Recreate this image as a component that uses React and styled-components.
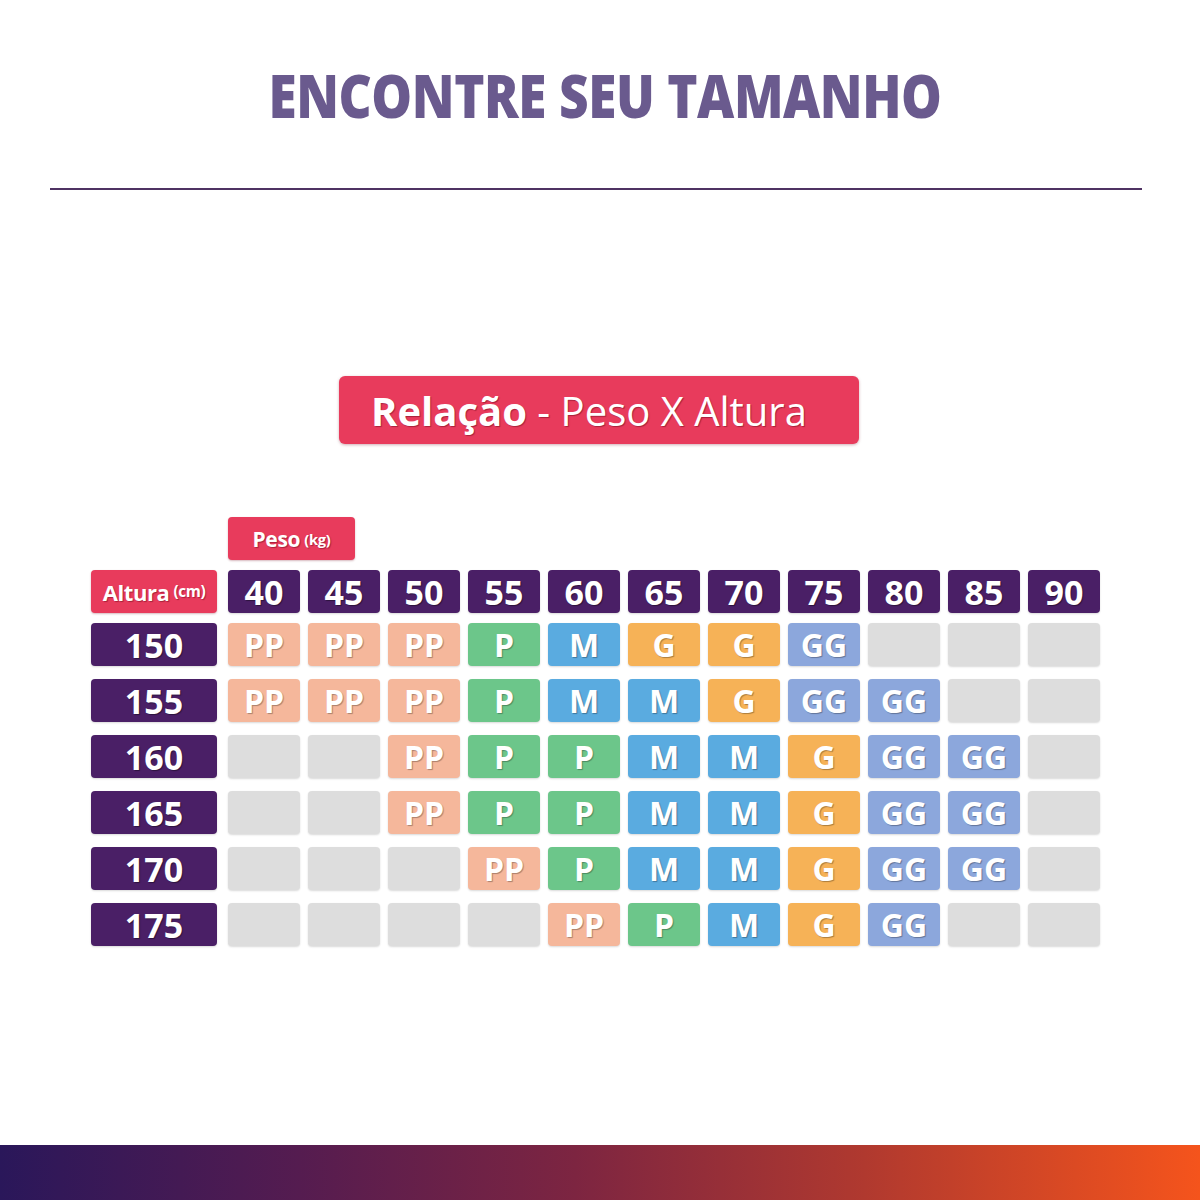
import React from "react";
import styled, { createGlobalStyle } from "styled-components";

const GlobalStyle = createGlobalStyle`
  body {
    margin: 0;
    background: #ffffff;
    font-family: "Open Sans", "Noto Sans", sans-serif;
  }
`;

const weights = ["40", "45", "50", "55", "60", "65", "70", "75", "80", "85", "90"];

const rows = [
  { height: "150", sizes: ["PP", "PP", "PP", "P", "M", "G", "G", "GG", "", "", ""] },
  { height: "155", sizes: ["PP", "PP", "PP", "P", "M", "M", "G", "GG", "GG", "", ""] },
  { height: "160", sizes: ["", "", "PP", "P", "P", "M", "M", "G", "GG", "GG", ""] },
  { height: "165", sizes: ["", "", "PP", "P", "P", "M", "M", "G", "GG", "GG", ""] },
  { height: "170", sizes: ["", "", "", "PP", "P", "M", "M", "G", "GG", "GG", ""] },
  { height: "175", sizes: ["", "", "", "", "PP", "P", "M", "G", "GG", "", ""] },
];

const sizeColors = {
  PP: "#f5b79b",
  P: "#6cc68a",
  M: "#5aabe0",
  G: "#f6b257",
  GG: "#8ca7dc",
  "": "#dddddd",
};

function App() {
  return (
    <Page>
      <GlobalStyle />
      <Title>ENCONTRE SEU TAMANHO</Title>
      <Divider />
      <Banner>
        <strong>Relação</strong>&nbsp;- Peso X Altura
      </Banner>
      <Chart>
        <PesoTag>
          Peso <small>(kg)</small>
        </PesoTag>
        <Row $header>
          <LabelTag>
            Altura <small>(cm)</small>
          </LabelTag>
          {weights.map((w) => (
            <HeadCell key={w}>{w}</HeadCell>
          ))}
        </Row>
        {rows.map((r) => (
          <Row key={r.height}>
            <HeightCell>{r.height}</HeightCell>
            {r.sizes.map((s, i) => (
              <SizeCell key={i} $color={sizeColors[s]}>
                {s}
              </SizeCell>
            ))}
          </Row>
        ))}
      </Chart>
      <BottomBar />
    </Page>
  );
}

export default App;

const Page = styled.div`
  width: 1200px;
  height: 1200px;
  display: flex;
  flex-direction: column;
  overflow: hidden;
`;

const Title = styled.h1`
  margin: 65px 0 0;
  font-size: 60px;
  line-height: 60px;
  font-weight: 800;
  color: #6a5a8e;
  text-align: center;
  letter-spacing: -0.5px;
  transform: translateX(5px) scaleX(0.855);
`;

const Divider = styled.div`
  margin: 63px 0 0 50px;
  width: 1092px;
  height: 2px;
  background: #4f3263;
`;

const Banner = styled.div`
  align-self: flex-start;
  margin: 186px 0 0 339px;
  width: 520px;
  height: 68px;
  display: flex;
  align-items: center;
  justify-content: center;
  padding-right: 20px;
  box-sizing: border-box;
  background: #e83b5c;
  border-radius: 6px;
  box-shadow: 0 1px 3px rgba(120, 20, 40, 0.35);
  color: #ffffff;
  font-size: 40px;
  font-weight: 400;
  text-shadow: 1px 1px 1px rgba(90, 0, 20, 0.45);

  strong {
    font-weight: 700;
  }
`;

const Chart = styled.div`
  margin: 73px 0 0 91px;
  display: flex;
  flex-direction: column;
  gap: 13px;
`;

const Tag = styled.div`
  display: flex;
  align-items: center;
  justify-content: center;
  background: #e83b5c;
  border-radius: 4px;
  color: #ffffff;
  font-weight: 700;
  box-shadow: 0 1px 2px rgba(120, 20, 40, 0.3);
  text-shadow: 1px 1px 1px rgba(90, 0, 20, 0.45);

  small {
    font-size: 0.7em;
    margin-left: 4px;
  }
`;

const PesoTag = styled(Tag)`
  margin: 0 0 -3px 137px;
  width: 127px;
  height: 43px;
  font-size: 21px;
  letter-spacing: -0.3px;
`;

const LabelTag = styled(Tag)`
  width: 126px;
  height: 43px;
  margin-right: 3px;
  font-size: 22px;
  letter-spacing: -0.4px;
`;

const Row = styled.div`
  display: flex;
  gap: 8px;
  margin-bottom: ${(p) => (p.$header ? "-3px" : "0")};
`;

const Cell = styled.div`
  width: 72px;
  height: 43px;
  display: flex;
  align-items: center;
  justify-content: center;
  border-radius: 4px;
  color: #ffffff;
  font-weight: 700;
  box-shadow: 0 1px 2px rgba(0, 0, 0, 0.15);
`;

const HeadCell = styled(Cell)`
  background: #4a1f66;
  font-size: 34px;
  text-shadow: 1px 1px 1px rgba(0, 0, 0, 0.4);
`;

const HeightCell = styled(Cell)`
  width: 126px;
  margin-right: 3px;
  background: #4a1f66;
  font-size: 34px;
  text-shadow: 1px 1px 1px rgba(0, 0, 0, 0.4);
`;

const SizeCell = styled(Cell)`
  background: ${(p) => p.$color};
  font-size: 32px;
  text-shadow: 1px 1px 1px rgba(0, 0, 0, 0.3);
`;

const BottomBar = styled.div`
  margin-top: auto;
  height: 55px;
  background: linear-gradient(
    90deg,
    #2a175a 0%,
    #551c50 25%,
    #7d2541 48%,
    #b0392f 72%,
    #f5541c 100%
  );
`;
